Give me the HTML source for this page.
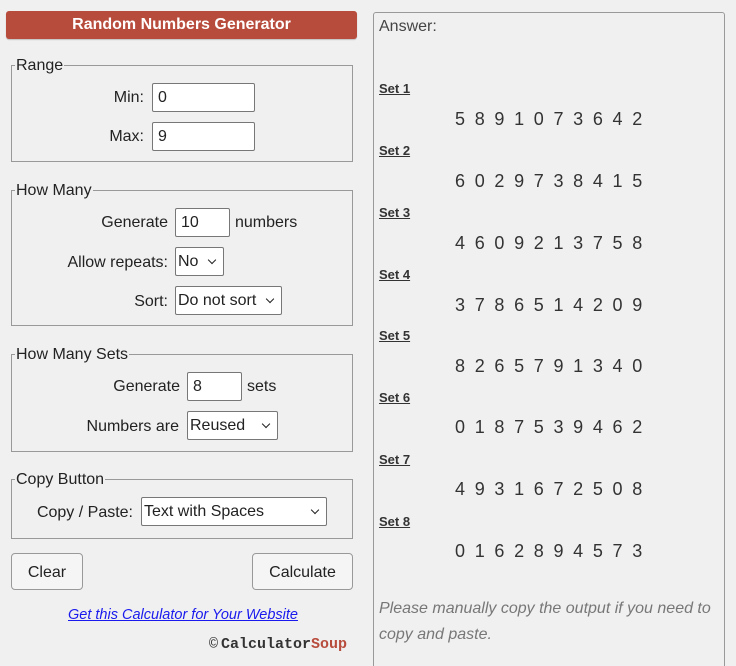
<!DOCTYPE html>
<html><head><style>
html,body{margin:0;width:736px;height:666px;overflow:hidden}
body{background:#f0f0f0;font-family:"Liberation Sans",sans-serif;color:#222;position:relative}
.a{position:absolute}
.hdr{left:6px;top:11px;width:351px;height:28px;background:#b84c3c;border-radius:3px;color:#fff;font-weight:bold;font-size:16px;line-height:28px;text-align:center;box-shadow:0 1px 1px rgba(0,0,0,.2)}
.fs{border:1px solid #999;left:11px;width:340px}
.lg{font-size:16px;background:#f0f0f0;padding:0 1px;left:15px}
.lbl{font-size:16px;text-align:right}
.inp{background:#fff;border:1px solid #777;border-radius:2px;font-size:16px;padding-left:5px;box-sizing:border-box;line-height:28px}
.sel{background:#fff;border:1px solid #777;border-radius:2px;font-size:16px;padding-left:2px;box-sizing:border-box;line-height:28px}
.sel:after{content:"";position:absolute;right:8px;top:9px;width:5px;height:5px;border-right:1.5px solid #222;border-bottom:1.5px solid #222;transform:rotate(45deg)}
.btn{background:#f5f5f5;border:1px solid #999;border-radius:4px;font-size:16px;text-align:center;line-height:37px;box-sizing:border-box;height:37px}
.set{left:379px;font-size:13px;font-weight:bold;text-decoration:underline;color:#333}
.num{left:455px;font-size:18px;color:#333}
.num span{display:inline-block;width:19.7px}
</style></head><body>
<div class="a hdr">Random Numbers Generator</div>

<div class="a fs" style="top:65px;height:95px"></div>
<div class="a lg" style="top:57px">Range</div>
<div class="a lbl" style="left:60px;width:84px;top:89px">Min:</div>
<div class="a inp" style="left:152px;top:83px;width:103px;height:29px">0</div>
<div class="a lbl" style="left:60px;width:84px;top:128px">Max:</div>
<div class="a inp" style="left:152px;top:122px;width:103px;height:29px">9</div>

<div class="a fs" style="top:190px;height:134px"></div>
<div class="a lg" style="top:182px">How Many</div>
<div class="a lbl" style="left:40px;width:128px;top:214px">Generate</div>
<div class="a inp" style="left:175px;top:208px;width:55px;height:29px">10</div>
<div class="a" style="left:235px;top:214px;font-size:16px">numbers</div>
<div class="a lbl" style="left:20px;width:148px;top:254px">Allow repeats:</div>
<div class="a sel" style="left:175px;top:247px;width:49px;height:29px">No</div>
<div class="a lbl" style="left:40px;width:128px;top:293px">Sort:</div>
<div class="a sel" style="left:175px;top:286px;width:107px;height:29px">Do not sort</div>

<div class="a fs" style="top:354px;height:96px"></div>
<div class="a lg" style="top:346px">How Many Sets</div>
<div class="a lbl" style="left:40px;width:140px;top:378px">Generate</div>
<div class="a inp" style="left:187px;top:372px;width:55px;height:29px">8</div>
<div class="a" style="left:247px;top:378px;font-size:16px">sets</div>
<div class="a lbl" style="left:40px;width:139px;top:418px">Numbers are</div>
<div class="a sel" style="left:187px;top:411px;width:91px;height:29px">Reused</div>

<div class="a fs" style="top:479px;height:58px"></div>
<div class="a lg" style="top:471px">Copy Button</div>
<div class="a lbl" style="left:20px;width:113px;top:504px">Copy / Paste:</div>
<div class="a sel" style="left:141px;top:497px;width:186px;height:29px">Text with Spaces</div>

<div class="a btn" style="left:11px;top:553px;width:72px">Clear</div>
<div class="a btn" style="left:252px;top:553px;width:101px">Calculate</div>
<div class="a" style="left:68px;top:607px;font-size:14.5px;font-style:italic;color:#1a1aee;text-decoration:underline">Get this Calculator for Your Website</div>
<div class="a" style="left:209px;top:636px;font-size:15px;font-family:'Liberation Mono',monospace;font-weight:bold;color:#333"><span style="font-weight:normal;margin-right:3px">©</span>Calculator<span style="color:#b84c3c">Soup</span></div>

<div class="a" style="left:373px;top:12px;width:350px;height:680px;border:1px solid #999;border-radius:3px"></div>
<div class="a" style="left:379px;top:18px;font-size:16px;color:#444">Answer:</div>
<div class="a set" style="top:81px">Set 1</div><div class="a num" style="top:109px"><span>5</span><span>8</span><span>9</span><span>1</span><span>0</span><span>7</span><span>3</span><span>6</span><span>4</span><span>2</span></div>
<div class="a set" style="top:143px">Set 2</div><div class="a num" style="top:171px"><span>6</span><span>0</span><span>2</span><span>9</span><span>7</span><span>3</span><span>8</span><span>4</span><span>1</span><span>5</span></div>
<div class="a set" style="top:205px">Set 3</div><div class="a num" style="top:233px"><span>4</span><span>6</span><span>0</span><span>9</span><span>2</span><span>1</span><span>3</span><span>7</span><span>5</span><span>8</span></div>
<div class="a set" style="top:267px">Set 4</div><div class="a num" style="top:295px"><span>3</span><span>7</span><span>8</span><span>6</span><span>5</span><span>1</span><span>4</span><span>2</span><span>0</span><span>9</span></div>
<div class="a set" style="top:328px">Set 5</div><div class="a num" style="top:356px"><span>8</span><span>2</span><span>6</span><span>5</span><span>7</span><span>9</span><span>1</span><span>3</span><span>4</span><span>0</span></div>
<div class="a set" style="top:390px">Set 6</div><div class="a num" style="top:417px"><span>0</span><span>1</span><span>8</span><span>7</span><span>5</span><span>3</span><span>9</span><span>4</span><span>6</span><span>2</span></div>
<div class="a set" style="top:452px">Set 7</div><div class="a num" style="top:479px"><span>4</span><span>9</span><span>3</span><span>1</span><span>6</span><span>7</span><span>2</span><span>5</span><span>0</span><span>8</span></div>
<div class="a set" style="top:514px">Set 8</div><div class="a num" style="top:541px"><span>0</span><span>1</span><span>6</span><span>2</span><span>8</span><span>9</span><span>4</span><span>5</span><span>7</span><span>3</span></div>
<div class="a" style="left:379px;top:596px;width:340px;font-size:16px;font-style:italic;color:#777;line-height:26px">Please manually copy the output if you need to copy and paste.</div>
</body></html>
